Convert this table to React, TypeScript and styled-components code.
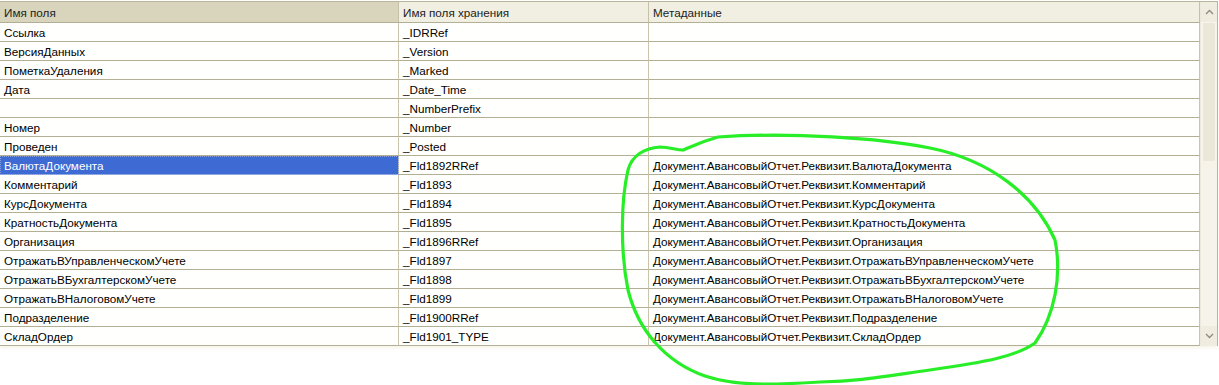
import styled, { createGlobalStyle } from "styled-components";

const GlobalStyle = createGlobalStyle`
  html, body {
    margin: 0;
    padding: 0;
    background: #ffffff;
  }
  body {
    font-family: Tahoma, "Liberation Sans", Arial, sans-serif;
  }
`;

const Page = styled.main`
  position: relative;
  width: 1219px;
  height: 385px;
  overflow: hidden;
  background: #fff;
`;

const Frame = styled.div`
  display: flex;
  width: 1217px;
  margin-top: 1px;
  border-top: 1px solid #b9b59c;
  border-right: 1px solid #b9b59c;
  box-shadow: 0 2px 3px rgba(230, 222, 190, 0.35);
`;

const Table = styled.div`
  flex: 1;
  display: grid;
  grid-template-columns: 399px 250px 551px;
  grid-auto-rows: 19px;
  grid-template-rows: 21px;
  font-size: 11.7px;
  color: #000;
`;

const HeadCell = styled.div<{ $sorted?: boolean }>`
  display: flex;
  align-items: center;
  padding-left: 4px;
  background: ${(p) => (p.$sorted ? "#d9d5bc" : "#f1efe1")};
  border-bottom: 1px solid #b3af95;
  border-right: 1px solid #c5c1a8;
  color: #222;
  white-space: nowrap;
`;

const Cell = styled.div<{ $selected?: boolean }>`
  display: flex;
  align-items: center;
  padding-left: 4px;
  background: ${(p) => (p.$selected ? "#3d6bd3" : "#fffffd")};
  color: ${(p) => (p.$selected ? "#fff" : "#000")};
  border-bottom: 1px solid #b3af95;
  border-right: 1px solid #c9c5ad;
  outline: ${(p) => (p.$selected ? "1px dotted #8aa0d8" : "none")};
  outline-offset: -1px;
  white-space: nowrap;
  overflow: hidden;
`;

const ScrollBar = styled.div`
  width: 17px;
  display: flex;
  flex-direction: column;
  background: #f5f3ea;
  border-left: 1px solid #ece9dc;
`;

const ScrollButton = styled.div`
  height: 20px;
  display: flex;
  align-items: center;
  justify-content: center;
  background: #efece0;
  color: #9a9682;
`;

const Thumb = styled.div`
  height: 138px;
  margin: 0 1px;
  background: #ebe7d9;
  border: 1px solid #f6f4ec;
`;

const Track = styled.div`
  flex: 1;
`;

const Overlay = styled.svg`
  position: absolute;
  left: 0;
  top: 0;
  pointer-events: none;
`;

const META = "Документ.АвансовыйОтчет.Реквизит.";

const rows: [string, string, string][] = [
  ["Ссылка", "_IDRRef", ""],
  ["ВерсияДанных", "_Version", ""],
  ["ПометкаУдаления", "_Marked", ""],
  ["Дата", "_Date_Time", ""],
  ["", "_NumberPrefix", ""],
  ["Номер", "_Number", ""],
  ["Проведен", "_Posted", ""],
  ["ВалютаДокумента", "_Fld1892RRef", META + "ВалютаДокумента"],
  ["Комментарий", "_Fld1893", META + "Комментарий"],
  ["КурсДокумента", "_Fld1894", META + "КурсДокумента"],
  ["КратностьДокумента", "_Fld1895", META + "КратностьДокумента"],
  ["Организация", "_Fld1896RRef", META + "Организация"],
  ["ОтражатьВУправленческомУчете", "_Fld1897", META + "ОтражатьВУправленческомУчете"],
  ["ОтражатьВБухгалтерскомУчете", "_Fld1898", META + "ОтражатьВБухгалтерскомУчете"],
  ["ОтражатьВНалоговомУчете", "_Fld1899", META + "ОтражатьВНалоговомУчете"],
  ["Подразделение", "_Fld1900RRef", META + "Подразделение"],
  ["СкладОрдер", "_Fld1901_TYPE", META + "СкладОрдер"],
];

const Arrow = ({ up }: { up?: boolean }) => (
  <svg width="9" height="6" viewBox="0 0 9 6">
    <path
      d={up ? "M1 5 L4.5 1.5 L8 5" : "M1 1 L4.5 4.5 L8 1"}
      fill="none"
      stroke="#8f8b78"
      strokeWidth="1.3"
    />
  </svg>
);

export default function App() {
  return (
    <Page>
      <GlobalStyle />
      <Frame>
        <Table>
          <HeadCell $sorted>Имя поля</HeadCell>
          <HeadCell>Имя поля хранения</HeadCell>
          <HeadCell>Метаданные</HeadCell>
          {rows.map(([name, stored, meta], i) => (
            <>
              <Cell key={"a" + i} $selected={i === 7}>
                {name}
              </Cell>
              <Cell key={"b" + i}>{stored}</Cell>
              <Cell key={"c" + i}>{meta}</Cell>
            </>
          ))}
        </Table>
        <ScrollBar>
          <ScrollButton>
            <Arrow up />
          </ScrollButton>
          <Thumb />
          <Track />
          <ScrollButton>
            <Arrow />
          </ScrollButton>
        </ScrollBar>
      </Frame>
      <Overlay width="1219" height="385" viewBox="0 0 1219 385">
        <path
          d="M683 150 C690 147 700 142 718 137 C790 132 880 138 930 148 C990 160 1035 195 1055 240 C1062 275 1055 315 1035 343 C1015 357 985 362 930 370 C880 377 860 381 820 382 C770 385 735 386 705 376 C665 362 638 330 628 290 C620 250 621 200 628 170 C632 155 645 148 660 147 C670 147 676 150 683 150"
          fill="none"
          stroke="#27ee27"
          strokeWidth="3.2"
          strokeLinecap="round"
          strokeLinejoin="round"
        />
      </Overlay>
    </Page>
  );
}
